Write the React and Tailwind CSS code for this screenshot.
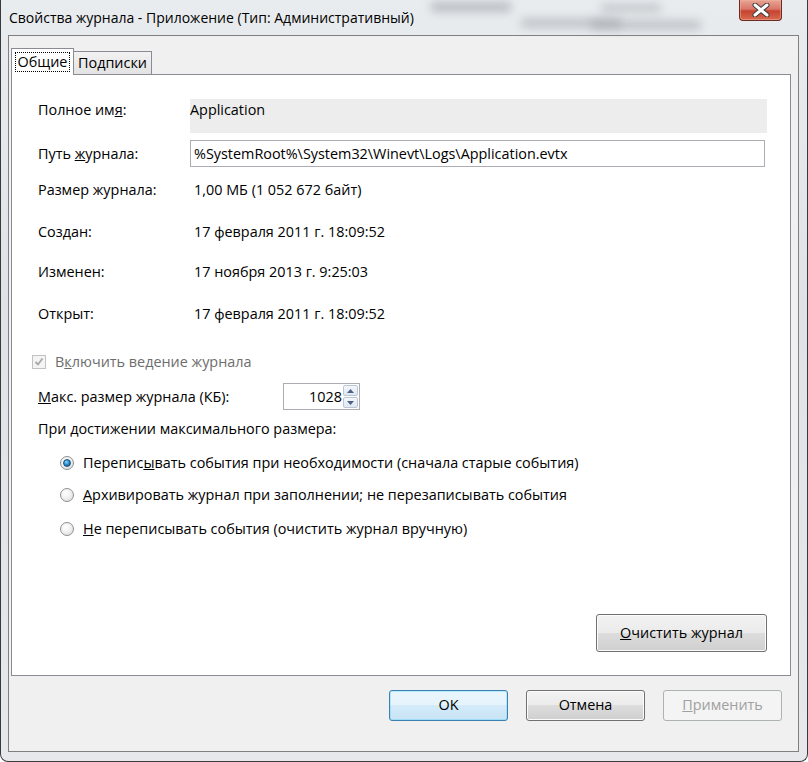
import React from "react";

const font = { fontFamily: '"Open Sans", "Noto Sans", sans-serif' };

function WinButton({ children, className = "", variant = "normal" }) {
  const base =
    "flex items-center justify-center rounded-[3px] border text-[14.4px] leading-none";
  const looks = {
    normal:
      "border-[#707070] bg-[linear-gradient(to_bottom,#f2f2f2_0%,#ebebeb_49%,#dddddd_50%,#cfcfcf_100%)] text-black shadow-[inset_0_0_0_1px_#fcfcfc]",
    default:
      "border-[#3c7fb1] bg-[linear-gradient(to_bottom,#eaf6fd_0%,#e5f3fb_49%,#d4ebf9_50%,#c8e3f5_100%)] text-black shadow-[inset_0_0_0_1px_#48d9fb55]",
    disabled:
      "border-[#adb2b5] bg-[#f4f4f4] text-[#a0a0a0]",
  };
  return <div className={`${base} ${looks[variant]} ${className}`}>{children}</div>;
}

function Radio({ checked }) {
  return (
    <div className="w-[14px] h-[14px] rounded-full border border-[#8e8f8f] bg-[radial-gradient(circle_at_40%_35%,#ffffff_0%,#f3f3f3_40%,#d6d6d6_100%)] flex items-center justify-center shrink-0">
      {checked && (
        <div className="w-[8px] h-[8px] rounded-full bg-[radial-gradient(circle_at_40%_35%,#8fdcf8_0%,#2e8fcf_45%,#0f4f86_100%)] border border-[#1b4f7e]" />
      )}
    </div>
  );
}

export default function App() {
  return (
    <div
      className="relative w-[808px] h-[762px] overflow-hidden rounded-b-[8px] border-x border-b border-[#3a3a3a] bg-[linear-gradient(to_bottom,#e9ecef,#dfe3e7_40%,#e6e8eb)]"
      style={font}
    >
      {/* blurred content behind aero glass */}
      <div className="absolute left-[430px] top-[2px] w-[80px] h-[10px] bg-[#9aa0a6] blur-[5px] opacity-60" />
      <div className="absolute left-[520px] top-[18px] w-[100px] h-[10px] bg-[#9aa0a6] blur-[5px] opacity-50" />
      <div className="absolute left-[600px] top-[4px] w-[60px] h-[8px] bg-[#9aa0a6] blur-[5px] opacity-50" />
      <div className="absolute left-[590px] top-[20px] w-[110px] h-[10px] bg-[#9aa0a6] blur-[5px] opacity-50" />

      {/* title bar */}
      <div className="relative flex h-[35px] items-start">
        <div className="pl-[8px] pt-[8px] text-[14px] leading-[20px] text-black">
          Свойства журнала - Приложение (Тип: Административный)
        </div>
        <div className="ml-auto mr-[25px] flex h-[21px] w-[43px] items-center justify-center rounded-b-[4px] border border-t-0 border-[#6b2a22] bg-[linear-gradient(to_bottom,#e8a493_0%,#d9776a_45%,#c7432f_55%,#d86a4f_100%)] shadow-[inset_0_0_0_1px_#f1b7a877]">
          <svg width="18" height="14" viewBox="0 0 18 14">
            <path d="M3 2 L15 12 M15 2 L3 12" stroke="#3b3b3b" strokeWidth="5" strokeLinecap="round" />
            <path d="M3 2 L15 12 M15 2 L3 12" stroke="#ffffff" strokeWidth="3" strokeLinecap="round" />
          </svg>
        </div>
      </div>

      {/* client area */}
      <div className="ml-[7px] mr-[8px] flex h-[717px] flex-col border border-[#808080] bg-[#f0f0f0]">
        {/* tabs */}
        <div className="ml-[2px] mt-[12px] flex items-end">
          <div className="relative z-10 -mb-px flex h-[27px] w-[63px] items-start justify-center border border-b-0 border-[#898c95] bg-white pt-[3px]">
            <span className="border border-dotted border-black px-[2px] text-[14.4px] leading-[18px] text-black">
              Общие
            </span>
          </div>
          <div className="flex h-[23px] w-[78px] items-center justify-center border border-b-0 border-l-0 border-[#898c95] bg-[linear-gradient(to_bottom,#f2f2f2,#e3e3e3)] text-[14.4px] text-black">
            Подписки
          </div>
        </div>

        {/* tab panel */}
        <div className="ml-[2px] mr-[7px] flex h-[602px] flex-col border border-[#898c95] bg-white pl-[26px] pr-[23px] pt-[24px] text-[14.4px] text-black">
          <div className="flex h-[34px]">
            <div className="w-[152px] leading-[22px]">
              Полное им<u>я</u>:
            </div>
            <div className="flex-1 bg-[#ededed] leading-[22px] pr-1">Application</div>
          </div>

          <div className="mt-[7px] flex h-[27px] items-center">
            <div className="w-[152px] leading-[22px]">
              Путь <u>ж</u>урнала:
            </div>
            <div className="mr-[2px] flex h-[27px] flex-1 items-center border border-[#abadb3] pl-[3px]">
              %SystemRoot%\System32\Winevt\Logs\Application.evtx
            </div>
          </div>

          {[
            ["Размер журнала:", "1,00 МБ (1 052 672 байт)", "mt-[12px]"],
            ["Создан:", "17 февраля 2011 г. 18:09:52", "mt-[20px]"],
            ["Изменен:", "17 ноября 2013 г. 9:25:03", "mt-[18px]"],
            ["Открыт:", "17 февраля 2011 г. 18:09:52", "mt-[20px]"],
          ].map(([k, v, m]) => (
            <div key={k} className={`flex h-[22px] items-center ${m}`}>
              <div className="w-[156px]">{k}</div>
              <div>{v}</div>
            </div>
          ))}

          <div className="-ml-[6px] mt-[26px] flex h-[22px] items-center gap-[9px] text-[#6d6d6d]">
            <div className="flex h-[14px] w-[14px] items-center justify-center border border-[#c2c2c2] bg-[#f4f4f4]">
              <svg width="10" height="10" viewBox="0 0 10 10">
                <path d="M1.5 5 L4 7.5 L8.5 1.5" fill="none" stroke="#a8a8a8" strokeWidth="1.8" />
              </svg>
            </div>
            <span>
              В<u>к</u>лючить ведение журнала
            </span>
          </div>

          <div className="mt-[10px] flex h-[27px] items-center">
            <div className="w-[245px]">
              <u>М</u>акс. размер журнала (КБ):
            </div>
            <div className="flex h-[27px] w-[77px] items-center border border-[#abadb3]">
              <div className="flex-1 pr-[1px] text-right">1028</div>
              <div className="flex h-full w-[16px] flex-col gap-px py-[1px] pr-[1px]">
                {["M1 6 L4.5 2 L8 6Z", "M1 2 L4.5 6 L8 2Z"].map((d) => (
                  <div
                    key={d}
                    className="flex flex-1 items-center justify-center rounded-[2px] border border-[#b8c6d8] bg-[linear-gradient(to_bottom,#f4f7fb,#dfe7f1)]"
                  >
                    <svg width="9" height="8" viewBox="0 0 9 8">
                      <path d={d} fill="#4d6185" />
                    </svg>
                  </div>
                ))}
              </div>
            </div>
          </div>

          <div className="mt-[8px] flex h-[22px] items-center">
            При достижении максимального размера:
          </div>

          {[
            [true, <>Перепис<u>ы</u>вать события при необходимости (сначала старые события)</>, "mt-[12px]"],
            [false, <><u>А</u>рхивировать журнал при заполнении; не перезаписывать события</>, "mt-[10px]"],
            [false, <><u>Н</u>е переписывать события (очистить журнал вручную)</>, "mt-[12px]"],
          ].map(([c, t, m], i) => (
            <div key={i} className={`ml-[22px] flex h-[22px] items-center gap-[9px] ${m}`}>
              <Radio checked={c} />
              <span>{t}</span>
            </div>
          ))}

          <div className="mt-auto mb-[23px] flex justify-end">
            <WinButton className="h-[38px] w-[171px]">
              <span>
                <u>О</u>чистить журнал
              </span>
            </WinButton>
          </div>
        </div>

        {/* dialog buttons */}
        <div className="mr-[16px] mt-[14px] flex justify-end gap-[18px]">
          <WinButton variant="default" className="h-[31px] w-[119px]">
            OK
          </WinButton>
          <WinButton className="h-[31px] w-[119px]">Отмена</WinButton>
          <WinButton variant="disabled" className="h-[31px] w-[119px]">
            <span>
              <u>П</u>рименить
            </span>
          </WinButton>
        </div>
      </div>
    </div>
  );
}
